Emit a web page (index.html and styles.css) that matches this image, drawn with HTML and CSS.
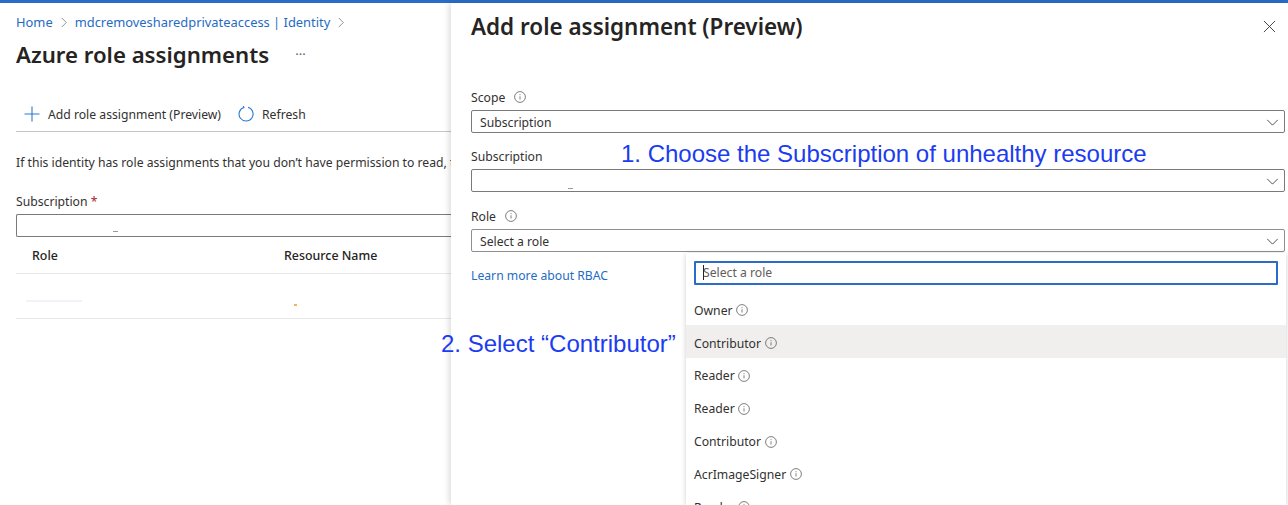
FILE: index.html
```html
<!DOCTYPE html>
<html lang="en">
<head>
    <meta charset="UTF-8">
    <title>Azure role assignments</title>
    <link rel="stylesheet" href="styles.css">
</head>
<body>
    <div class="topbar"></div>

    <main class="blade">
        <nav class="crumbs">
            <a href="#">Home</a>
            <svg class="crumb-sep" viewBox="0 0 8 12"><path d="M1.5 1l5 5-5 5"/></svg>
            <a href="#">mdcremovesharedprivateaccess | Identity</a>
            <svg class="crumb-sep" viewBox="0 0 8 12"><path d="M1.5 1l5 5-5 5"/></svg>
        </nav>
        <div class="title-row">
            <h1>Azure role assignments</h1>
            <span class="more">&middot;&middot;&middot;</span>
        </div>
        <div class="toolbar">
            <button class="tool">
                <svg class="tool-icon" viewBox="0 0 16 16"><path d="M8 0.5v15M0.5 8h15"/></svg>
                Add role assignment (Preview)
            </button>
            <button class="tool">
                <svg class="tool-icon" viewBox="0 0 16 16"><path d="M5.8 1.4A7 7 0 1 0 10 1.3M5.3 0l0.6 1.6-1.7 0.6"/></svg>
                Refresh
            </button>
        </div>
        <p class="notice">If this identity has role assignments that you don&rsquo;t have permission to read, t</p>
        <label class="sub-label">Subscription <span class="req">*</span></label>
        <div class="sub-input"><span class="redact"></span></div>
        <div class="grid-row grid-head">
            <span class="col-role">Role</span>
            <span>Resource Name</span>
        </div>
        <div class="grid-row grid-body">
            <span class="col-role"><span class="smudge"></span></span>
            <span><span class="speck"></span></span>
        </div>
    </main>

    <aside class="panel">
        <header class="panel-head">
            <h2>Add role assignment (Preview)</h2>
            <svg class="close" viewBox="0 0 14 14"><path d="M1 1l12 12M13 1L1 13"/></svg>
        </header>

        <div class="field field-scope">
            <label>Scope <svg class="info" viewBox="0 0 12 12"><circle cx="6" cy="6" r="5.4"/><path d="M6 5.3v3.2M6 3.2v1"/></svg></label>
            <div class="select">Subscription<svg class="chev" viewBox="0 0 14 8"><path d="M1 1l6 6 6-6"/></svg></div>
        </div>
        <div class="field">
            <label>Subscription</label>
            <div class="select"><span class="redact"></span><svg class="chev" viewBox="0 0 14 8"><path d="M1 1l6 6 6-6"/></svg></div>
        </div>
        <div class="field">
            <label>Role <svg class="info" viewBox="0 0 12 12"><circle cx="6" cy="6" r="5.4"/><path d="M6 5.3v3.2M6 3.2v1"/></svg></label>
            <div class="select select-light">Select a role<svg class="chev" viewBox="0 0 14 8"><path d="M1 1l6 6 6-6"/></svg></div>
        </div>
        <a class="rbac" href="#">Learn more about RBAC</a>

        <div class="dropdown">
            <div class="search"><span class="caret"></span>Select a role</div>
            <ul class="options">
                <li>Owner <svg class="info" viewBox="0 0 12 12"><circle cx="6" cy="6" r="5.4"/><path d="M6 5.3v3.2M6 3.2v1"/></svg></li>
                <li class="hover">Contributor <svg class="info" viewBox="0 0 12 12"><circle cx="6" cy="6" r="5.4"/><path d="M6 5.3v3.2M6 3.2v1"/></svg></li>
                <li>Reader <svg class="info" viewBox="0 0 12 12"><circle cx="6" cy="6" r="5.4"/><path d="M6 5.3v3.2M6 3.2v1"/></svg></li>
                <li>Reader <svg class="info" viewBox="0 0 12 12"><circle cx="6" cy="6" r="5.4"/><path d="M6 5.3v3.2M6 3.2v1"/></svg></li>
                <li>Contributor <svg class="info" viewBox="0 0 12 12"><circle cx="6" cy="6" r="5.4"/><path d="M6 5.3v3.2M6 3.2v1"/></svg></li>
                <li>AcrImageSigner <svg class="info" viewBox="0 0 12 12"><circle cx="6" cy="6" r="5.4"/><path d="M6 5.3v3.2M6 3.2v1"/></svg></li>
                <li>Reader <svg class="info" viewBox="0 0 12 12"><circle cx="6" cy="6" r="5.4"/><path d="M6 5.3v3.2M6 3.2v1"/></svg></li>
            </ul>
        </div>
    </aside>

    <div class="note note-one">1. Choose the Subscription of unhealthy resource</div>
    <div class="note note-two">2. Select &ldquo;Contributor&rdquo;</div>
</body>
</html>
```

FILE: styles.css
```css
html, body {
    height: 505px;
    overflow: hidden;
}
body {
    margin: 0;
    position: relative;
    font-family: "Noto Sans", "Open Sans", Arial, sans-serif;
    font-size: 12.2px;
    color: #323130;
    background: #fff;
}
a {
    color: #1f6cc4;
    text-decoration: none;
}
.topbar {
    height: 3px;
    background: #2b6cc9;
}

/* left blade */
.blade {
    width: 435px;
    padding: 0 0 0 16px;
    overflow: hidden;
}
.crumbs {
    display: flex;
    align-items: center;
    height: 16px;
    margin-top: 11px;
    gap: 7px;
    font-size: 12.9px;
}
.crumb-sep {
    width: 8px;
    height: 11px;
    fill: none;
    stroke: #8a8886;
    stroke-width: 1;
}
.title-row {
    display: flex;
    align-items: center;
    height: 34px;
    margin-top: 7px;
}
h1 {
    margin: 0;
    font-size: 22.2px;
    font-weight: 600;
    color: #252423;
}
.more {
    margin-left: 26px;
    font-size: 13px;
    color: #605e5c;
}
.toolbar {
    display: flex;
    align-items: center;
    gap: 17px;
    height: 30px;
    margin-top: 28px;
    padding-left: 8px;
}
.tool {
    display: flex;
    align-items: center;
    gap: 8px;
    padding: 0;
    border: 0;
    background: none;
    font: inherit;
    color: #323130;
}
.tool-icon {
    width: 16px;
    height: 16px;
    fill: none;
    stroke: #2b79d3;
    stroke-width: 1.1;
}
.notice {
    margin: 2px 0 0;
    padding-top: 22px;
    border-top: 1px solid #c8c6c4;
    height: 23px;
    white-space: nowrap;
    line-height: 18px;
}
.sub-label {
    display: block;
    margin-top: 16px;
    line-height: 18px;
}
.req {
    color: #a4262c;
}
.sub-input {
    height: 21px;
    margin-top: 3px;
    border: 1px solid #7a7a7a;
    border-right: 0;
    border-radius: 2px 0 0 2px;
    overflow: hidden;
}
.redact {
    display: block;
    width: 5px;
    height: 1px;
    margin: 16px 0 0 96px;
    background: #9a9a9a;
}
.grid-row {
    display: flex;
    align-items: center;
    border-bottom: 1px solid #e8e8e8;
}
.grid-head {
    height: 36px;
    font-size: 12.4px;
    font-weight: 500;
    color: #252423;
}
.grid-body {
    height: 44px;
}
.col-role {
    width: 252px;
    padding-left: 16px;
}
.smudge {
    display: block;
    width: 56px;
    height: 2px;
    margin: 9px 0 0 -6px;
    background: #f1f3fb;
}
.speck {
    display: block;
    width: 3px;
    height: 2px;
    margin: 18px 0 0 10px;
    background: #f5b45c;
}

/* side panel, lies over the blade */
.panel {
    position: absolute;
    top: 3px;
    left: 451px;
    right: 0;
    bottom: 0;
    padding: 0 3px 0 20px;
    background: #fff;
    box-shadow: -2px 0 6px rgba(0, 0, 0, 0.14);
}
.panel-head {
    display: flex;
    align-items: center;
    justify-content: space-between;
    height: 46px;
}
h2 {
    margin: 0;
    font-size: 22.45px;
    font-weight: 600;
    color: #252423;
}
.close {
    width: 13px;
    height: 13px;
    margin: 0 9px 0 0;
    fill: none;
    stroke: #3b3a39;
    stroke-width: 1;
}
.field {
    margin-bottom: 14px;
}
.field-scope {
    margin-top: 39px;
}
.field label {
    display: flex;
    align-items: center;
    gap: 9px;
    height: 18px;
    margin-bottom: 4px;
}
.field:nth-of-type(2) {
    margin-bottom: 15px;
}
.field:nth-of-type(3) {
    margin-bottom: 15px;
}
.select {
    display: flex;
    align-items: center;
    justify-content: space-between;
    height: 19px;
    padding: 2px 5px 0 8px;
    border: 1px solid #7a7a7a;
    border-radius: 2px;
}
.select .redact {
    align-self: flex-start;
    margin: 16px 0 0 88px;
}
.select-light {
    border-color: #8f8f8f;
}
.chev {
    width: 13px;
    height: 7px;
    fill: none;
    stroke: #3b3a39;
    stroke-width: 1;
}
.info {
    width: 12px;
    height: 12px;
    fill: none;
    stroke: #605e5c;
    stroke-width: 0.8;
}
.rbac {
    display: inline-block;
    line-height: 18px;
}
.dropdown {
    position: absolute;
    top: 250px;
    left: 235px;
    right: 2px;
    bottom: 0;
    overflow: hidden;
    background: #fff;
    box-shadow: 0 1px 5px rgba(0, 0, 0, 0.2);
}
.search {
    position: relative;
    height: 20px;
    margin: 8px 8px 0 8px;
    padding-left: 7px;
    border: 2px solid #2b6cc9;
    border-radius: 1px;
    line-height: 19px;
    color: #605e5c;
}
.caret {
    position: absolute;
    left: 7px;
    top: 2px;
    width: 1px;
    height: 15px;
    background: #252423;
}
.options {
    margin: 7px 0 0;
    padding: 0;
    list-style: none;
}
.options li {
    display: flex;
    align-items: center;
    gap: 3.5px;
    box-sizing: border-box;
    height: 32.8px;
    padding: 4px 0 0 8px;
}
.options .hover {
    background: #f0efed;
}

/* annotations pasted on the screenshot */
.note {
    position: absolute;
    font-family: "Liberation Sans", Arial, sans-serif;
    font-size: 24px;
    line-height: 28px;
    color: #1b3cf0;
    white-space: nowrap;
}
.note-one {
    top: 140px;
    left: 621px;
}
.note-two {
    top: 330px;
    left: 441px;
}
```
